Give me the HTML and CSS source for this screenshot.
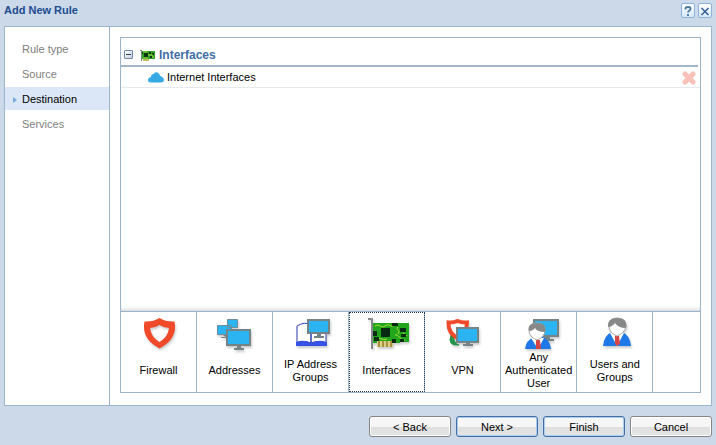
FILE: index.html
```html
<!DOCTYPE html>
<html lang="en">
<head>
<meta charset="utf-8">
<title>Add New Rule</title>
<link rel="stylesheet" href="styles.css">
</head>
<body>
<svg class="defs" aria-hidden="true">
  <defs>
    <symbol id="nic" viewBox="0 0 48 38">
      <path d="M10 10h36v19h-9v1H10z" fill="#20a51d"/>
      <path d="M14 28h16v6H14z" fill="#d8d08a"/>
      <path d="M16 28v6M20 28v6M24 28v6M28 28v6" stroke="#a8913c" stroke-width="2"/>
      <path d="M12 13c5-3 6 3 10 0s5 1 8 0M12 25c4-2 6 3 12 1M32 22c4-1 4 5 10 5M35 14c-3 3 3 3 0 7M40 20l4 3" fill="none" stroke="#b5e334" stroke-width="1"/>
      <path d="M18 15h9v9h-9zM10 18h4v5h-4zM11 24h5v4h-5zM29 10h6v3h-6zM37 15h6v4h-6zM38 21h5v3h-5zM29 26h4v4h-4zM37 26h4v3h-4z" fill="#062b10"/>
      <path d="M5 5h5v31H8V7H5z" fill="#858b8b"/>
    </symbol>
  </defs>
</svg>
<main class="dialog">
  <header class="titlebar">
    <h1>Add New Rule</h1>
    <button class="tool" aria-label="Help"><svg viewBox="0 0 12 12"><path d="M3.500 4.500V3.500Q3.500 2 6 2T8.500 3.500Q8.500 5 7.500 5.500Q6 6.500 6 7.500M6 9v2" fill="none" stroke="#4a789b" stroke-width="1.800"/></svg></button>
    <button class="tool" aria-label="Close"><svg viewBox="0 0 12 12"><path d="M2.500 3l7 7M9.500 3l-7 7" stroke="#345d96" stroke-width="1.500"/></svg></button>
  </header>
  <div class="panel">
    <nav class="steps">
      <a href="#type">Rule type</a>
      <a href="#source">Source</a>
      <a href="#destination" class="current" aria-current="step">Destination</a>
      <a href="#services">Services</a>
    </nav>
    <section class="content">
      <div class="selector">
        <div class="list">
          <h2 class="group">
            <button class="toggle" aria-label="Collapse Interfaces"></button>
            <svg class="small-nic" viewBox="0 0 16 12"><path d="M2 2h13v8H2z" fill="#2fa526"/><path d="M0 1h2v11H1V2H0z" fill="#7c8b7d"/><path d="M3 10h6v2H3z" fill="#c5bd62"/><path d="M4 4h4v4H4zM9 3h2v2H9zM12 4h2v2h-2zM10 7h2v2h-2zM2 3h1v2H2z" fill="#0b3511"/><path d="M3 3h4M8 6h5M3 9h5M12 8h2" stroke="#9bd83c"/></svg>
            <span>Interfaces</span>
          </h2>
          <div class="item">
            <svg class="cloud" viewBox="0 0 16 11"><path d="M3 10.500Q0 10.500 0 8T3 5Q3 2 5.500 2Q7-.5 9.500.5T12 4Q13 3.500 14 5Q16 6 16 8T13 10.500z" fill="#38aae3"/></svg>
            <span>Internet Interfaces</span>
            <button class="remove" aria-label="Remove Internet Interfaces"><svg viewBox="0 0 14 14"><path d="M3 3l8 8M11 3l-8 8" stroke="#f9c1b8" stroke-width="5" stroke-linecap="round"/></svg></button>
          </div>
        </div>
        <div class="types">
          <button class="type">
            <svg viewBox="0 0 48 38"><path fill-rule="evenodd" d="M24.500 5Q31 9 39.500 8.500Q43 26 24.500 35.500Q6 26 9.500 8.500Q18 9 24.500 5zM24.500 12Q20 15 15 15Q16 24 24.500 29Q33 24 34 15Q29 15 24.500 12z" fill="#f04a2b"/></svg>
            <span>Firewall</span>
          </button>
          <button class="type">
            <svg viewBox="0 0 48 38"><path d="M16.500 6.500h10v8h-10zM6.500 12.500h14v9h-14z" fill="#2cb4f2" stroke="#6c8e9c"/><path d="M12 22h3v2h-5v1h6" fill="#768386"/><path d="M16 17h23v15H16z" fill="#2cb4f2" stroke="#748486" stroke-width="2"/><path d="M26 33h4v2h3v2H23v-2h3z" fill="#748486"/></svg>
            <span>Addresses</span>
          </button>
          <button class="type">
            <svg viewBox="0 0 48 38"><path d="M10 13Q18 8 24 12V30Q17 27 10 31zM24 12Q32 9 39 12V31Q31 27 24 30z" fill="#fff" stroke="#2b3caf" stroke-width="1"/><path d="M9 29Q17 26 24 30Q31 26 40 29V33H9z" fill="#3552e5"/><path d="M21 7h21v13H21z" fill="#2cb4f2" stroke="#748486" stroke-width="2"/><path d="M30 21h4v2h3v2H27v-2h3z" fill="#748486"/></svg>
            <span>IP Address Groups</span>
          </button>
          <button class="type selected" aria-pressed="true">
            <svg viewBox="0 0 48 38"><use href="#nic"/></svg>
            <span>Interfaces</span>
          </button>
          <button class="type">
            <svg viewBox="0 0 48 38"><path d="M12 22Q8 33 20 32Q15 31 14 22z" fill="#269447" stroke="#269447"/><path d="M18.500 8Q23 10 28 9.500Q28 20 18.500 25Q9 20 9.500 9.500Q14 10 18.500 8z" fill="#fff" stroke="#f04a2b" stroke-width="4"/><path d="M18 15h21v14H18z" fill="#2cb4f2" stroke="#748486" stroke-width="2"/><path d="M27 30h4v1h3v2H24v-2h3z" fill="#748486"/></svg>
            <span>VPN</span>
          </button>
          <button class="type">
            <svg viewBox="0 0 48 38"><path d="M19 7h24v16H19z" fill="#2cb4f2" stroke="#748486" stroke-width="2"/><path d="M29 24h6v2h4v2H29z" fill="#748486"/><path d="M10 36Q11 27 19 24H28Q35 27 36 36z" fill="#1e78e8"/><path d="M16 25l7 11 6-11z" fill="#fff"/><path d="M21 27h4l1 9h-5z" fill="#d84546"/><path d="M14 17Q14 10 22 10Q30 10 30 17Q30 24 22 27Q14 24 14 17z" fill="#fff" stroke="#aaa"/><path d="M14 18Q12 10 22 10Q32 10 30 19Q22 19 20 15Q18 18 14 18z" fill="#878989"/></svg>
            <span>Any Authenticated User</span>
          </button>
          <button class="type">
            <svg viewBox="0 0 48 38"><path d="M12 33Q13 22 21 19H31Q39 22 40 33z" fill="#1e78e8"/><path d="M19 20l7 13 7-13z" fill="#fff"/><path d="M24 23h4l1 8-3 2-2-2z" fill="#d84546"/><path d="M18 13Q18 5 26 5Q35 5 35 13Q34 20 26 23Q18 20 18 13z" fill="#fff" stroke="#aaa"/><path d="M17 14Q16 5 26 5Q37 5 35 15Q27 15 24 10Q21 14 17 14z" fill="#878989"/></svg>
            <span>Users and Groups</span>
          </button>
        </div>
      </div>
    </section>
  </div>
  <footer class="actions">
    <button class="action">&lt; Back</button>
    <button class="action primary">Next &gt;</button>
    <button class="action primary">Finish</button>
    <button class="action">Cancel</button>
  </footer>
</main>
</body>
</html>
```
FILE: styles.css
```css
* { box-sizing: border-box; }
body {
  margin: 0;
  background: #ccd9e8;
  color: #000;
  font: 11px/13px "Liberation Sans", Arial, sans-serif;
}
button { margin: 0; padding: 0; font: inherit; color: inherit; }
svg { display: block; flex: none; }
.defs { position: absolute; width: 0; height: 0; }
.dialog {
  min-height: 100vh;
  padding: 0 4px;
  display: flex;
  flex-direction: column;
}
.titlebar { display: flex; align-items: center; gap: 3px; height: 26px; padding-bottom: 5px; }
h1 { margin: 0; flex: 1; color: #204b91; font-size: 11px; line-height: 13px; }
.tool {
  width: 14px;
  height: 15px;
  border: 1px solid #8bb2dc;
  border-radius: 2px;
  background: linear-gradient(#fff, #d5e9f8);
}
.tool svg { width: 12px; height: 12px; }
.panel { flex: 1; display: flex; border: 1px solid #9db5ca; background: #fff; }
.steps { width: 105px; padding-top: 10px; border-right: 1px solid #9db5ca; display: flex; flex-direction: column; gap: 2px; }
.steps a { display: flex; align-items: center; height: 23px; padding: 2px 0 0 17px; color: #808080; text-decoration: none; }
.steps .current { background: #dbe7f6; color: #000; padding-left: 8px; }
.current::before { content: ""; margin-right: 5px; border: 3px solid transparent; border-left: 4px solid #79a7dc; border-right: 0; }
.content { flex: 1; display: flex; padding: 10px 10px 12px; }
.selector { flex: 1; display: flex; flex-direction: column; border: 1px solid #9db5c8; }
.list { flex: 1; box-shadow: inset 0 -4px 4px -3px #c5c9cd; }
.group { display: flex; align-items: center; height: 29px; margin: 0 2px 0 0; padding: 6px 0 0 3px; border-bottom: 2px solid #a2b6c8; color: #416fa5; font-size: 12px; line-height: 14px; }
.toggle { width: 9px; height: 9px; border: 1px solid #7189a8; border-radius: 1px; background: linear-gradient(#345, #345) center / 5px 1px no-repeat, linear-gradient(135deg, #fff, #c3d1e2); }
.small-nic { width: 16px; height: 12px; margin: 0 3px 0 7px; }
.item { display: flex; align-items: center; gap: 3px; height: 21px; padding: 1px 4px 0 27px; border-bottom: 1px solid #e6e8eb; }
.cloud { width: 16px; height: 11px; }
.remove { width: 14px; height: 14px; margin-left: auto; border: 0; background: none; }
.types { display: flex; border-top: 1px solid #9db5c8; }
.type { flex: 0 1 76px; height: 80px; padding: 1px 0; display: flex; flex-direction: column; align-items: center; border: 0; border-right: 1px solid #9db5c8; background: #fff; }
.type svg { width: 48px; height: 38px; filter: drop-shadow(1px 2px 1px #0003); }
.type span { height: 39px; padding: 0 4px; display: flex; align-items: center; text-align: center; }
.selected { outline: 1px dotted #273d57; outline-offset: -1px; }
.actions { display: flex; justify-content: flex-end; gap: 5px; padding: 10px 0 8px; }
.action { width: 82px; height: 21px; padding-top: 1px; border: 1px solid #868686; border-radius: 3px; background: linear-gradient(#f6f6f6 0 52%, #dfdfdf 55%, #e5e5e5); box-shadow: inset 0 0 0 1px #fff; }
.primary { border-color: #456ea5; box-shadow: inset 0 0 0 1px #a9cdf1; }
```
